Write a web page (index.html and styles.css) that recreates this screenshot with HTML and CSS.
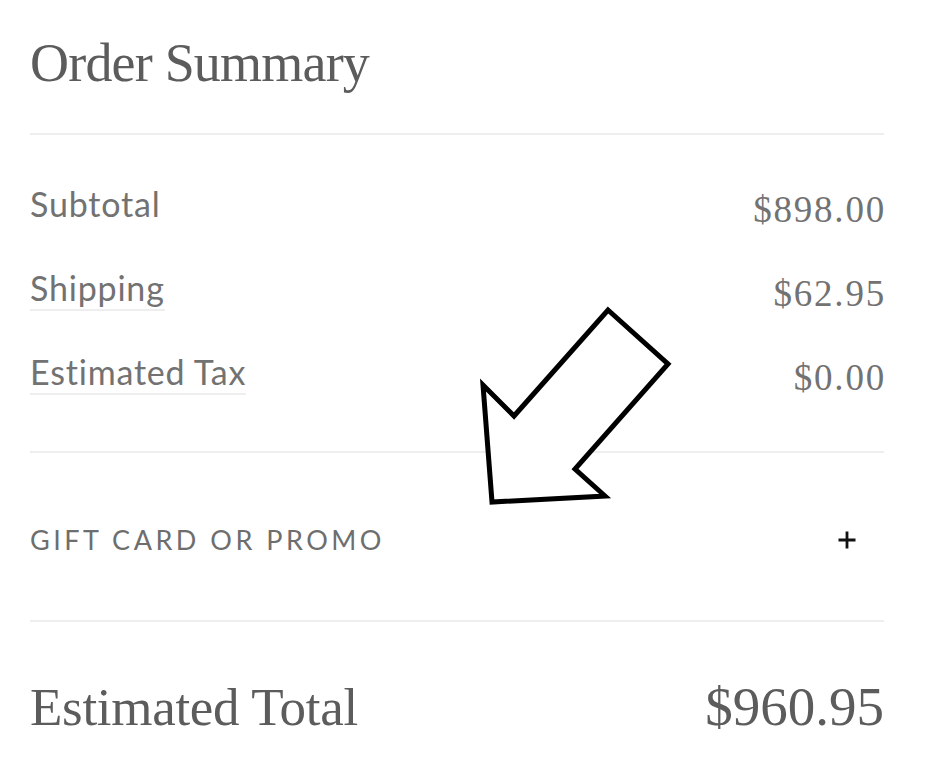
FILE: index.html
```html
<!DOCTYPE html>
<html>
<head>
<meta charset="utf-8">
<link rel="stylesheet" href="styles.css">
</head>
<body>
<div class="summary">
  <div class="header">
    <h1 class="title">Order Summary</h1>
  </div>
  <div class="lines">
    <div class="row">
      <span class="label">Subtotal</span>
      <span class="value">$898.00</span>
    </div>
    <div class="row">
      <span class="label link">Shipping</span>
      <span class="value">$62.95</span>
    </div>
    <div class="row">
      <span class="label link">Estimated Tax</span>
      <span class="value">$0.00</span>
    </div>
  </div>
  <div class="promo">
    <span class="promo-label">GIFT CARD OR PROMO</span>
    <span class="plus">
      <svg width="20" height="20" viewBox="0 0 20 20"><path d="M10 1.5v17M1.5 10h17" stroke="#111" stroke-width="2.8" fill="none"/></svg>
    </span>
  </div>
  <div class="total">
    <span class="total-label">Estimated Total</span>
    <span class="total-value">$960.95</span>
  </div>
</div>
<svg class="arrow" width="948" height="762" viewBox="0 0 948 762">
  <polygon points="608,310 668,364 575,469 605,496 492,502 483,385 514,416" fill="#fff" stroke="#000" stroke-width="5" stroke-linejoin="miter"/>
</svg>
</body>
</html>
```

FILE: styles.css
```css
html, body {
  margin: 0;
  padding: 0;
  background: #fff;
}
body {
  position: relative;
  width: 948px;
  height: 762px;
  overflow: hidden;
}
.summary {
  margin-left: 30px;
  width: 854px;
  display: flex;
  flex-direction: column;
}
.header {
  height: 133px;
  border-bottom: 2px solid #eeeeee;
}
.title {
  margin: 0;
  padding-top: 33px;
  font-family: "Liberation Serif", "DejaVu Serif", serif;
  font-weight: normal;
  font-size: 54px;
  line-height: 60px;
  letter-spacing: -0.8px;
  color: #5c5c5c;
}
.lines {
  display: flex;
  flex-direction: column;
  padding-top: 48px;
  height: 318px;
  box-sizing: border-box;
  border-bottom: 2px solid #eeeeee;
}
.row {
  display: flex;
  justify-content: space-between;
  align-items: flex-start;
  height: 84px;
}
.label {
  font-family: "Lato", "Liberation Sans", sans-serif;
  font-size: 34px;
  line-height: 42px;
  color: #727272;
  letter-spacing: 0.8px;
}
.link {
  border-bottom: 2px solid #eeeeee;
  padding-bottom: 0;
}
.value {
  font-family: "Liberation Serif", "DejaVu Serif", serif;
  font-size: 37px;
  line-height: 42px;
  color: #727272;
  padding-top: 6px;
  letter-spacing: 1.8px;
  margin-right: -2px;
}
.promo {
  display: flex;
  justify-content: space-between;
  align-items: center;
  height: 169px;
  padding-top: 6px;
  box-sizing: border-box;
  border-bottom: 2px solid #eeeeee;
}
.promo-label {
  font-family: "Lato", "Liberation Sans", sans-serif;
  font-size: 27px;
  letter-spacing: 3.5px;
  color: #6e6e6e;
}
.plus {
  display: flex;
  margin-right: 27px;
}
.total {
  display: flex;
  justify-content: space-between;
  align-items: center;
  height: 139px;
  padding-top: 30px;
  box-sizing: border-box;
}
.total-label,
.total-value {
  font-family: "Liberation Serif", "DejaVu Serif", serif;
  font-size: 53px;
  letter-spacing: -0.3px;
  color: #5c5c5c;
}
.total-value {
  letter-spacing: 0;
  font-size: 55px;
}
.arrow {
  position: absolute;
  left: 0;
  top: 0;
  pointer-events: none;
}
```
